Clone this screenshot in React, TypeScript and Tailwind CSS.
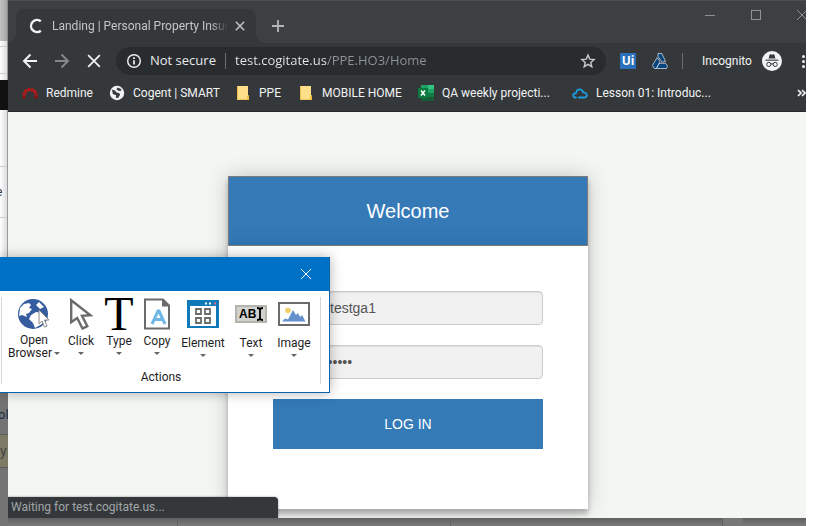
import React from "react";

const uiFont = "font-['Roboto','Noto_Sans',sans-serif]";

/* ---------- icons ---------- */

function BackArrow({ className = "" }: { className?: string }) {
  return (
    <svg viewBox="0 0 16 16" className={`size-4 ${className}`} fill="none" stroke="currentColor" strokeWidth="2">
      <path d="M15 8H2.5M8.5 1.5 2 8l6.5 6.5" />
    </svg>
  );
}

function Cross({ className = "", width = 1 }: { className?: string; width?: number }) {
  return (
    <svg viewBox="0 0 12 12" className={className} fill="none" stroke="currentColor" strokeWidth={width}>
      <path d="M1 1l10 10M11 1 1 11" />
    </svg>
  );
}

function LandingIcon() {
  return (
    <svg viewBox="0 0 16 16" className="size-4" fill="none" stroke="#f1f3f4" strokeWidth="2.4">
      <path d="M12.8 3.3A6 6 0 1 0 12.8 12.7" />
    </svg>
  );
}

function InfoIcon() {
  return (
    <svg viewBox="0 0 16 16" className="size-4 shrink-0" fill="none" stroke="#e8eaed" strokeWidth="1.5">
      <circle cx="8" cy="8" r="6.3" />
      <path d="M8 7.2v4.3M8 4.3v1.6" strokeWidth="1.8" />
    </svg>
  );
}

function StarIcon() {
  return (
    <svg viewBox="0 0 16 16" className="size-4" fill="none" stroke="#c8cbce" strokeWidth="1.4">
      <path d="M8 2l1.7 4.1 4.4.4-3.3 2.9 1 4.3L8 11.4l-3.8 2.3 1-4.3L1.9 6.5l4.4-.4z" />
    </svg>
  );
}

function DriveIcon() {
  return (
    <svg viewBox="0 0 16 16" className="size-4" fill="#07457c" stroke="#e4eef6" strokeWidth=".7" strokeLinejoin="round">
      <path d="M6 .5h3.800l3.700 7.800-3.300.9L6 3.500z" />
      <path d="M5.200 4.600 8 8.800 4.200 15.500H2.400L.4 12.400z" />
      <path d="M7.200 10.300h6.400l2 2.900-1.200 2.300H4.600z" />
    </svg>
  );
}

function IncognitoIcon() {
  return (
    <svg viewBox="0 0 20 20" className="size-5">
      <circle cx="10" cy="10" r="10" fill="#f1f3f4" />
      <path d="M6.6 7.4 7.6 3.8q.3-.8 1.1-.5l1.3.4 1.3-.4q.8-.3 1.1.5l1 3.6z" fill="#35383b" />
      <path d="M3.6 8.6h12.8v1.1H3.6z" fill="#35383b" />
      <g fill="none" stroke="#35383b" strokeWidth="1">
        <circle cx="6.8" cy="13.4" r="2.1" />
        <circle cx="13.2" cy="13.4" r="2.1" />
        <path d="M8.9 13.1q1.1-.7 2.2 0" />
      </g>
    </svg>
  );
}

function RedmineIcon() {
  return (
    <svg viewBox="0 0 16 16" className="size-4" fill="none" strokeWidth="3.2">
      <path d="M2 13.5V11M14 13.5V11" stroke="#8f0d0d" strokeDasharray="2.6 .6" />
      <path d="M2 10.5C2 2.500 14 2.500 14 10.5" stroke="#c01616" strokeDasharray="2.8 .6" />
    </svg>
  );
}

function GlobeIcon() {
  return (
    <svg viewBox="0 0 16 16" className="size-4">
      <circle cx="8" cy="8" r="7.2" fill="#f1f3f4" />
      <path d="M3 4.6l3.3 1.2 1 1.8 2.8.4 1 1.8-2 3.2-2.3-.3.4-2.4-3.4-1.4zM8.6 2.4l4 1.9-1.3 2-2-.7-1.9-1z" fill="#35383b" />
    </svg>
  );
}

function FolderIcon() {
  return (
    <svg viewBox="0 0 14 16" className="h-4 w-3.5">
      <path d="M1 1h11v9.5h1V15H1z" fill="#ffe08a" />
      <path d="M1 1h.9v14H1zM1 14.2h11V15H1zM11 10.6h2V15h-2z" fill="#f0bd45" />
    </svg>
  );
}

function ExcelIcon() {
  return (
    <svg viewBox="0 0 16 16" className="size-4">
      <path d="M3 0h13v16H3z" fill="#21a366" />
      <path d="M10 0h6v4h-6z" fill="#33c481" />
      <path d="M3 8h13v4H3z" fill="#107c41" />
      <path d="M3 12h13v4H3z" fill="#185c37" />
      <path d="M0 3h10v10H0z" fill="#0f7a40" />
      <path d="M3 5.5l4 5M7 5.5l-4 5" stroke="#fff" strokeWidth="1.5" />
    </svg>
  );
}

function CloudIcon() {
  return (
    <svg viewBox="0 0 16 16" className="size-4" fill="none" stroke="#1b9de0" strokeWidth="1.8" strokeLinecap="round">
      <path d="M4 12.5H3.3a2 2 0 0 1-.3-4M3 8.5C4 8.6 4.2 8 4.3 7.400c.5-4 6-4 6.8 0 2.600-.3 4.500 2 3.300 4.200-.5.700-1.200.9-2 .9H7" />
    </svg>
  );
}

/* ---------- browser window ---------- */

function TabStrip() {
  return (
    <header className="flex h-[43px] shrink-0 border-t border-[#4b4f52] bg-[#3c4043]">
      <div className="flex items-end pt-2">
        <i className="size-2 bg-[radial-gradient(circle_at_0_0,#3c4043_7px,#35383b_8px)]" />
        <div className="flex h-full w-60 items-center rounded-t-lg bg-[#35383b] pr-2 pl-3">
          <LandingIcon />
          <span className="ml-2 flex-1 overflow-hidden mask-r-from-90% text-[12px] leading-4 whitespace-nowrap text-[#c3c6c9]">
            Landing | Personal Property Insurance
          </span>
          <button aria-label="Close tab" className="ml-1 grid size-4 place-items-center text-[#c3c6c9]">
            <Cross className="size-2.5" width={1.8} />
          </button>
        </div>
        <i className="size-2 bg-[radial-gradient(circle_at_100%_0,#3c4043_7px,#35383b_8px)]" />
      </div>
      <button aria-label="New tab" className="ml-1.5 grid w-4 place-items-center pt-2 text-[#b4b7b9]">
        <svg viewBox="0 0 12 12" className="size-3" stroke="currentColor" strokeWidth="1.8">
          <path d="M6 0v12M0 6h12" />
        </svg>
      </button>
      <div className="ml-auto flex h-7 items-center text-[#8f9294]">
        <button aria-label="Minimize" className="grid w-[46px] place-items-center">
          <span className="h-px w-2.5 bg-current" />
        </button>
        <button aria-label="Maximize" className="grid w-[46px] place-items-center">
          <span className="size-2.5 border border-current" />
        </button>
        <button aria-label="Close" className="flex w-[27px] justify-end overflow-hidden">
          <Cross className="-mr-0.5 size-3 shrink-0" />
        </button>
      </div>
    </header>
  );
}

function Toolbar() {
  return (
    <div className="flex h-9 shrink-0 items-center bg-[#35383b] pl-3.5">
      <button aria-label="Back" className="text-[#f1f3f4]"><BackArrow /></button>
      <button aria-label="Forward" className="ml-4 text-[#85888a]"><BackArrow className="rotate-180" /></button>
      <button aria-label="Stop" className="ml-4 grid size-4 place-items-center text-[#f1f3f4]">
        <Cross className="size-3.5" width={1.5} />
      </button>
      <div className="ml-3.5 flex h-7 min-w-0 flex-1 items-center rounded-full bg-[#292c2f] pr-2.5 pl-2.5 font-['Open_Sans','Noto_Sans',sans-serif] text-[13px]">
        <InfoIcon />
        <span className="ml-2 w-[67px] shrink-0 whitespace-nowrap text-[#e8eaed]">Not secure</span>
        <span className="mr-[9px] ml-2 h-4 w-px shrink-0 bg-[#6b6e71]" />
        <input
          aria-label="Address"
          defaultValue="test.cogitate.us/PPE.HO3/Home"
          className="min-w-0 flex-1 bg-[linear-gradient(90deg,#e8eaed_92px,#8f9498_92px)] bg-clip-text text-transparent outline-none"
        />
        <button aria-label="Bookmark this page"><StarIcon /></button>
      </div>
      <div className="flex w-[200px] shrink-0 items-center pl-3.5">
        <button aria-label="UiPath" className="grid size-4 place-items-center bg-[#2a70ba] font-['Open_Sans',sans-serif] text-[12px] leading-4 font-bold text-white">Ui</button>
        <button aria-label="Drive" className="ml-4"><DriveIcon /></button>
        <span className="ml-3.5 h-4 w-px bg-[#6b6e71]" />
        <button className="ml-[19px] flex w-20 items-center justify-between text-[12px] text-[#f1f3f4]">
          Incognito
          <IncognitoIcon />
        </button>
        <button aria-label="Menu" className="ml-5 grid gap-0.5">
          <span className="size-[3px] rounded-full bg-[#f1f3f4]" />
          <span className="size-[3px] rounded-full bg-[#f1f3f4]" />
          <span className="size-[3px] rounded-full bg-[#f1f3f4]" />
        </button>
      </div>
    </div>
  );
}

const bookmarks = [
  { label: "Redmine", icon: <RedmineIcon />, box: "w-[87px] gap-2" },
  { label: "Cogent | SMART", icon: <GlobeIcon />, box: "w-[126px] gap-2" },
  { label: "PPE", icon: <FolderIcon />, box: "w-[63px] gap-2" },
  { label: "MOBILE HOME", icon: <FolderIcon />, box: "w-[120px] gap-2" },
  { label: "QA weekly projecti...", icon: <ExcelIcon />, box: "w-[154px] gap-2" },
  { label: "Lesson 01: Introduc...", icon: <CloudIcon />, box: "gap-2" },
];

function BookmarksBar() {
  return (
    <nav className="flex h-[33px] shrink-0 items-center overflow-hidden border-b border-[#26292b] bg-[#35383b] pb-1 pl-3.5 text-[12px] text-[#f1f3f4]">
      {bookmarks.map((b) => (
        <a key={b.label} href="#" className={`flex shrink-0 items-center whitespace-nowrap ${b.box}`}>
          <span className="grid w-4 shrink-0 place-items-center">{b.icon}</span>
          {b.label}
        </a>
      ))}
      <button aria-label="More bookmarks" className="ml-auto">
        <svg viewBox="0 0 9 8" className="h-2 w-[9px]" fill="none" stroke="#f1f3f4" strokeWidth="1.7">
          <path d="M1 1l3 3-3 3M5 1l3 3-3 3" />
        </svg>
      </button>
    </nav>
  );
}

function LoginCard() {
  const field =
    "h-[34px] w-full rounded border border-[#ccc] bg-[#f1f1f1] text-[14px] text-[#555] shadow-[inset_0_1px_1px_rgba(0,0,0,0.08)] outline-none";
  return (
    <form className="w-[360px] bg-white font-['Liberation_Sans',Arial,sans-serif] shadow-[0_0_20px_rgba(0,0,0,0.2),0_5px_5px_rgba(0,0,0,0.24)]">
      <h1 className="flex h-[70px] items-center justify-center border border-[#7d7a7a] bg-linear-to-b from-[#357ab7] from-70% to-[#3073b0] text-[20px] text-white">
        Welcome
      </h1>
      <div className="flex flex-col gap-5 px-[45px] pt-[45px] pb-[60px]">
        <input aria-label="User name" defaultValue="testga1" className={`${field} pl-14`} />
        <input aria-label="Password" type="password" defaultValue="secret123" className={`${field} pl-[34px]`} />
        <button type="button" className="h-[50px] bg-[#337ab7] text-[14px] text-white">LOG IN</button>
      </div>
    </form>
  );
}

/* ---------- recorder ribbon ---------- */

function OpenBrowserArt() {
  return (
    <svg viewBox="0 0 34 32" className="h-8 w-[34px]">
      <circle cx="16" cy="16" r="15" fill="#345c9e" />
      <path d="M3 10l4-4 5-1 2 2-2 3 3 1-3 4-3 1 1 3-5-2-3 1zM14 17l5-3 6 1 2 5-2 6-7 4-2-5-4-4zM19 7l3-3 5 5-4 2z" fill="#fff" />
      <path d="M22 12v14l3-3 2.500 6 2.500-1-2.500-6h4.500z" fill="#fff" stroke="#8a8a8a" />
    </svg>
  );
}

function ClickArt() {
  return (
    <svg viewBox="0 0 24 32" className="h-8 w-6" fill="#fff" stroke="#6b6b6b" strokeWidth="2.400">
      <path d="M2.200 2.200v22l6-4.200 5.300 10.500 4.800-2.400-5.300-10.200 8.500-.6z" />
    </svg>
  );
}

function CopyArt() {
  return (
    <svg viewBox="0 0 28 32" className="h-8 w-7">
      <path d="M2 1.500h18l6 6V30.500H2z" fill="#fff" stroke="#6b6b6b" strokeWidth="2" />
      <path d="M19 1v7.500h7.500z" fill="#6b6b6b" />
      <path d="M9 26l6-13h1l6 13M11 21.500h9" fill="none" stroke="#6fb8e6" strokeWidth="3" />
    </svg>
  );
}

function ElementArt() {
  return (
    <svg viewBox="0 0 32 28" className="h-7 w-8">
      <path d="M0 0h32v28H0z" fill="#1079b8" />
      <path d="M3 6h26v20H3z" fill="#fff" />
      <path d="M18 3.500h2M22 3.500h2" stroke="#fff" strokeWidth="2" />
      <path d="M27 3.500h2" stroke="#f06a8a" strokeWidth="2" />
      <g fill="none" stroke="#6b6b6b" strokeWidth="1.800">
        <path d="M9 9h5v5H9zM18 9h5v5h-5zM9 18h5v5H9zM18 18h5v5h-5z" />
      </g>
    </svg>
  );
}

function TextArt() {
  return (
    <span className="flex h-[18px] w-8 items-center border-2 border-[#b4b4ac] bg-[#d2d2cf] pl-0.5 font-['Liberation_Sans',Arial,sans-serif] text-[12px] leading-3 font-bold text-black">
      AB
      <svg viewBox="0 0 8 14" className="h-3.5 w-2" fill="none" stroke="#000" strokeWidth="1.800">
        <path d="M1 1q3 0 3 2v8q0 2-3 2M7 1q-3 0-3 2M7 13q-3 0-3-2" />
      </svg>
    </span>
  );
}

function ImageArt() {
  return (
    <svg viewBox="0 0 32 24" className="h-6 w-8">
      <path d="M1 1h30v22H1z" fill="#fff" stroke="#6b6b6b" strokeWidth="2" />
      <circle cx="10" cy="8.500" r="2.800" fill="#efcf6a" />
      <path d="M4 19.500l3-3 3 1 5-9.500 3 5 2-2 2 4 2-2 3.500 6.500z" fill="#6491cd" />
    </svg>
  );
}

function Caret() {
  return <span className="border-x-3 border-t-3 border-x-transparent border-t-[#666]" />;
}

function RibbonButton({ label, art, box, low = false }: { label: string; art: React.ReactNode; box: string; low?: boolean }) {
  return (
    <button className={`flex flex-col items-center text-[12px] ${box}`}>
      <span className={`flex h-8 justify-center ${low ? "items-center" : "items-start"}`}>{art}</span>
      <span className={`leading-[14px] ${low ? "mt-1.5 mb-1" : "mt-1 mb-1"}`}>{label}</span>
      <Caret />
    </button>
  );
}

function RecorderRibbon() {
  return (
    <section className="absolute top-[257px] left-0 w-[330px] border-r border-b border-[#0764ad] bg-white text-[#1e1e1e] shadow-[0_0_12px_rgba(0,0,0,0.3)]">
      <div className="flex h-[34px] items-center justify-end bg-[#0072c6] pr-[17px] text-white">
        <button aria-label="Close recorder"><Cross className="size-3" /></button>
      </div>
      <div className="mt-1.5 mr-2 mb-2 ml-px flex h-[87px] flex-col border-x border-[#d5d5d5]">
        <div className="flex pt-px pl-1.5">
          <button className="flex w-[52px] flex-col items-center text-[12px]">
            <OpenBrowserArt />
            <span className="mt-1 leading-[13px]">Open</span>
            <span className="flex items-center gap-0.5 leading-[13px]">Browser <Caret /></span>
          </button>
          <RibbonButton label="Click" art={<ClickArt />} box="ml-0.5 w-[38px]" />
          <RibbonButton
            label="Type"
            art={<span className="font-['Liberation_Serif',serif] text-[48px] leading-8 text-black">T</span>}
            box="w-[38px]"
          />
          <RibbonButton label="Copy" art={<CopyArt />} box="w-[38px]" />
          <RibbonButton low label="Element" art={<ElementArt />} box="ml-0.5 w-[50px]" />
          <RibbonButton low label="Text" art={<TextArt />} box="w-[46px]" />
          <RibbonButton low label="Image" art={<ImageArt />} box="w-10" />
        </div>
        <h2 className="mt-auto text-center text-[12px] leading-[14px]">Actions</h2>
      </div>
    </section>
  );
}

/* ---------- page behind ---------- */

function BackPage() {
  return (
    <aside className="flex w-2 shrink-0 flex-col overflow-hidden bg-[#747474] text-[13px] text-[#333]">
      <div className="h-[41px] border-r border-[#8a8a8a] bg-linear-to-r from-[#c4c4c4] to-[#a5a5a5]" />
      <div className="h-[39px] border-r border-[#9a9a9a] bg-linear-to-r from-white to-[#ddd]">
        <div className="mt-[5px] h-7 border-y border-[#ccc]" />
      </div>
      <div className="h-[30px] bg-[#111]" />
      <div className="h-[275px] border-r border-[#9a9a9a] bg-linear-to-r from-white to-[#ddd]">
        <div className="mt-14 flex h-[52px] items-center border-y border-[#ccc] text-[12px]">
          <span className="-ml-1">e</span>
        </div>
      </div>
      <div className="flex h-[49px] items-center text-[#1e2f44]"><span className="-ml-0.5 pt-2.5">ol</span></div>
      <div className="flex h-[34px] items-center border-y border-[#5e5e5e] bg-[#7d7b66] text-[14px] text-[#444]">y</div>
    </aside>
  );
}

export default function App() {
  return (
    <div className={`relative flex min-h-screen overflow-hidden bg-white pr-[27px] ${uiFont}`}>
      <BackPage />
      <div className="flex min-w-0 flex-1 flex-col">
        <TabStrip />
        <Toolbar />
        <BookmarksBar />
        <main className="relative flex flex-1 justify-center overflow-hidden bg-[#f3f6f3] pt-16 pb-[9px] pl-0.5">
          <LoginCard />
          <div className="absolute bottom-0 left-0 h-[21px] w-[270px] rounded-tr bg-[#35383b] pl-[3px] text-[12px] leading-5 text-[#a2a6a8] shadow-[0_0_2px_rgba(0,0,0,0.5)]">
            Waiting for test.cogitate.us...
          </div>
        </main>
        <footer className="flex h-2 shrink-0 bg-linear-to-b from-[#606060] to-[#7b7b7b]">
          <span className="w-[170px] border-r border-[#606060]" />
          <span className="w-[273px] border-r border-[#606060]" />
          <span className="w-[272px] border-r border-[#606060]" />
          <span className="w-5 bg-[#777]" />
        </footer>
      </div>
      <RecorderRibbon />
    </div>
  );
}
